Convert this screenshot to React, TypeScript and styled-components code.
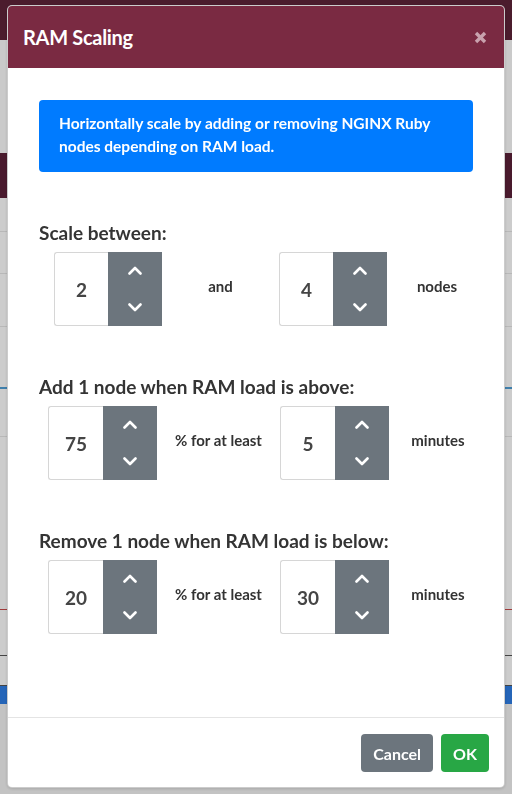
import React from "react";
import { createGlobalStyle, styled } from "styled-components";

const GlobalStyle = createGlobalStyle`
  html, body {
    margin: 0;
    padding: 0;
    width: 512px;
    height: 794px;
    overflow: hidden;
    font-family: "Lato", "Open Sans", "Liberation Sans", sans-serif;
  }
  * {
    box-sizing: border-box;
  }
`;

type TStepperProps = {
  value: number;
};

const Stepper = ({ value }: TStepperProps) => {
  return (
    <InputGroup>
      <Field>{value}</Field>
      <Buttons>
        <StepButton aria-label="increase">
          <svg width="14" height="9" viewBox="0 0 14 9">
            <polyline points="1.5,7.5 7,2 12.5,7.5" fill="none" stroke="#fff" strokeWidth="2.6" strokeLinecap="round" strokeLinejoin="round" />
          </svg>
        </StepButton>
        <StepButton aria-label="decrease">
          <svg width="14" height="9" viewBox="0 0 14 9">
            <polyline points="1.5,1.5 7,7 12.5,1.5" fill="none" stroke="#fff" strokeWidth="2.6" strokeLinecap="round" strokeLinejoin="round" />
          </svg>
        </StepButton>
      </Buttons>
    </InputGroup>
  );
};

type TRule = {
  title: string;
  offset: number;
  columns: string;
  first: number;
  between: string;
  second: number;
  unit: string;
};

const rules: TRule[] = [
  { title: "Scale between:", offset: 54, columns: "108px 117px 108px 100px", first: 2, between: "and", second: 4, unit: "nodes" },
  { title: "Add 1 node when RAM load is above:", offset: 48, columns: "109px 123px 109px 98px", first: 75, between: "% for at least", second: 5, unit: "minutes" },
  { title: "Remove 1 node when RAM load is below:", offset: 48, columns: "109px 123px 109px 98px", first: 20, between: "% for at least", second: 30, unit: "minutes" },
];

const backgroundRows = [
  { height: 40, color: "#5e2339", line: "none" },
  { height: 113, color: "#fdfdfd", line: "none" },
  { height: 45, color: "#5c2139", line: "none" },
  { height: 34, color: "#ffffff", line: "1px solid #e6e6e6" },
  { height: 42, color: "#ffffff", line: "1px solid #e6e6e6" },
  { height: 53, color: "#ffffff", line: "1px solid #e6e6e6" },
  { height: 62, color: "#ffffff", line: "2px solid #4f9fd6" },
  { height: 48, color: "#ffffff", line: "1px solid #e6e6e6" },
  { height: 173, color: "#ffffff", line: "1px solid #c94a4a" },
  { height: 46, color: "#ffffff", line: "1px solid #555" },
  { height: 30, color: "#ffffff", line: "1px solid #555" },
  { height: 18, color: "#2f7fe6", line: "none" },
  { height: 90, color: "#f4f4f4", line: "none" },
];

const App = () => {
  return (
    <>
      <GlobalStyle />
      <Page>
        {backgroundRows.map((row, i) => (
          <PageRow key={i} $height={row.height} $color={row.color} $line={row.line} />
        ))}
      </Page>
      <Backdrop />
      <Modal>
        <Header>
          <Title>RAM Scaling</Title>
          <CloseButton aria-label="close">
            <svg width="13" height="13" viewBox="0 0 13 13">
              <line x1="2" y1="2" x2="11" y2="11" stroke="currentColor" strokeWidth="3.4" />
              <line x1="11" y1="2" x2="2" y2="11" stroke="currentColor" strokeWidth="3.4" />
            </svg>
          </CloseButton>
        </Header>

        <Body>
          <Alert>
            Horizontally scale by adding or removing NGINX Ruby nodes depending on RAM load.
          </Alert>

          {rules.map((rule) => (
            <Section key={rule.title}>
              <SectionTitle>{rule.title}</SectionTitle>
              <ControlRow $offset={rule.offset} $columns={rule.columns}>
                <Stepper value={rule.first} />
                <RowLabel>{rule.between}</RowLabel>
                <Stepper value={rule.second} />
                <RowLabel>{rule.unit}</RowLabel>
              </ControlRow>
            </Section>
          ))}
        </Body>

        <Footer>
          <ActionButton $variant="secondary">Cancel</ActionButton>
          <ActionButton $variant="success">OK</ActionButton>
        </Footer>
      </Modal>
    </>
  );
};

export default App;

const Page = styled.div`
  display: flex;
  flex-direction: column;
  width: 512px;
  height: 794px;
  background: #ffffff;
`;

const PageRow = styled.div<{ $height: number; $color: string; $line: string }>`
  flex: 0 0 ${(p) => p.$height}px;
  background: ${(p) => p.$color};
  border-bottom: ${(p) => p.$line};
`;

const Backdrop = styled.div`
  position: fixed;
  inset: 0;
  background: rgba(0, 0, 0, 0.2);
`;

const Modal = styled.div`
  position: fixed;
  top: 5px;
  left: 7px;
  width: 498px;
  height: 783px;
  display: flex;
  flex-direction: column;
  background: #ffffff;
  border: 1px solid rgba(0, 0, 0, 0.2);
  border-radius: 5px;
  overflow: hidden;
  box-shadow: 0 1px 3px rgba(0, 0, 0, 0.15);
`;

const Header = styled.div`
  display: flex;
  align-items: center;
  justify-content: space-between;
  height: 62px;
  padding: 0 15px 0 15px;
  background: #7a2a42;
`;

const Title = styled.h5`
  margin: 0;
  font-size: 20px;
  font-weight: 700;
  color: #ffffff;
  letter-spacing: -0.3px;
`;

const CloseButton = styled.button`
  display: flex;
  align-items: center;
  justify-content: center;
  width: 20px;
  height: 20px;
  margin-right: -1px;
  padding: 0;
  border: none;
  background: transparent;
  color: #c9a2ae;
`;

const Body = styled.div`
  flex: 1;
  padding: 32px 31px 0 31px;
`;

const Alert = styled.div`
  height: 72px;
  padding: 12px 20px;
  border-radius: 4px;
  background: #007bff;
  color: #ffffff;
  font-size: 15.5px;
  font-weight: 700;
  line-height: 23px;
`;

const Section = styled.div`
  margin-top: 50px;
`;

const SectionTitle = styled.h6`
  margin: 0 0 8px 0;
  font-size: 19px;
  font-weight: 700;
  line-height: 22px;
  color: #343434;
`;

const ControlRow = styled.div<{ $offset: number; $columns: string }>`
  display: grid;
  grid-template-columns: ${(p) => p.$columns};
  align-items: center;
  margin-left: ${(p) => p.$offset - 39}px;
`;

const RowLabel = styled.span`
  padding-bottom: 6px;
  text-align: center;
  font-size: 15px;
  font-weight: 700;
  color: #333333;
`;

const InputGroup = styled.div`
  display: flex;
  height: 74px;
`;

const Field = styled.div`
  flex: 1;
  display: flex;
  align-items: center;
  justify-content: center;
  border: 1px solid #d6d6d6;
  border-right: none;
  border-radius: 3px 0 0 3px;
  font-size: 19px;
  font-weight: 700;
  color: #454545;
`;

const Buttons = styled.div`
  flex: 0 0 54px;
  display: flex;
  flex-direction: column;
  background: #6c757d;
`;

const StepButton = styled.button`
  flex: 1;
  display: flex;
  align-items: center;
  justify-content: center;
  padding: 0;
  border: none;
  background: transparent;
`;

const Footer = styled.div`
  display: flex;
  justify-content: flex-end;
  gap: 8px;
  padding: 16px 15px 15px 15px;
  border-top: 1px solid #e4e4e4;
`;

const ActionButton = styled.button<{ $variant: "secondary" | "success" }>`
  height: 38px;
  padding: 0 12px;
  border: none;
  border-radius: 4px;
  background: ${(p) => (p.$variant === "success" ? "#28a745" : "#6c757d")};
  color: #ffffff;
  font-family: "Lato", "Open Sans", "Liberation Sans", sans-serif;
  font-size: 16px;
  font-weight: 700;
`;
